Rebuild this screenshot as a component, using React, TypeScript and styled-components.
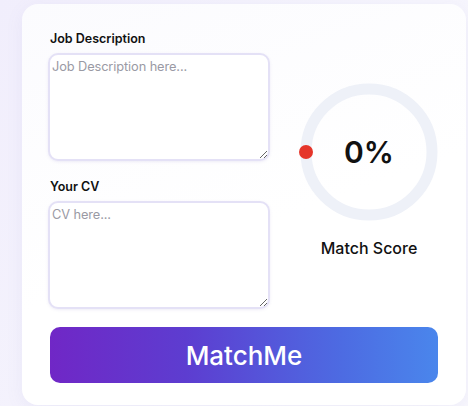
import React, { FC } from 'react';
import styled, { createGlobalStyle } from 'styled-components';

const GlobalStyle = createGlobalStyle`
  html, body {
    margin: 0;
    padding: 0;
    background: linear-gradient(120deg, #f1eefc 0%, #f6f5fd 60%, #f8f7fd 100%);
    font-family: Inter, "Noto Sans", "Liberation Sans", sans-serif;
    color: #111;
  }
`;

const Page = styled.div`
  width: 468px;
  height: 406px;
  padding: 4px 2px 0 22px;
  box-sizing: border-box;
  overflow: hidden;
`;

const Card = styled.div`
  width: 444px;
  background: linear-gradient(160deg, #fbfbfe 0%, #ffffff 55%);
  border-radius: 16px;
  box-shadow: 0 4px 18px rgba(120, 110, 190, 0.08);
  padding: 27px 28px 22px 28px;
  box-sizing: border-box;
`;

const Row = styled.div`
  display: flex;
  align-items: center;
`;

const FormCol = styled.div`
  width: 220px;
  display: flex;
  flex-direction: column;
`;

const Label = styled.label`
  font-size: 12.5px;
  line-height: 16px;
  font-weight: 600;
  color: #111;
  margin-bottom: 6px;
`;

const TextArea = styled.textarea<{ $spaced?: boolean }>`
  width: 222px;
  height: 108px;
  margin: 0 0 ${p => (p.$spaced ? '18px' : '0')} -2px;
  box-sizing: border-box;
  border: 2px solid #e4e1f6;
  border-radius: 10px;
  padding: 3px 2px;
  font-family: inherit;
  font-size: 12.8px;
  line-height: 18px;
  letter-spacing: -0.1px;
  color: #222;
  background: #fff;
  box-shadow: 0 1px 3px rgba(120, 110, 190, 0.12);
  outline: none;

  &::placeholder {
    color: #9a9aa4;
  }
`;

const ScoreCol = styled.div`
  flex: 1;
  display: flex;
  flex-direction: column;
  align-items: center;
  padding-left: 30px;
  gap: 18px;
`;

const Dial = styled.div`
  position: relative;
  width: 138px;
  height: 138px;

  svg {
    display: block;
    overflow: visible;
  }
`;

const Percent = styled.div`
  position: absolute;
  inset: 0;
  display: flex;
  align-items: center;
  justify-content: center;
  font-size: 30px;
  font-weight: 600;
  color: #111;
`;

const ScoreLabel = styled.div`
  font-size: 16px;
  line-height: 18px;
  font-weight: 500;
  color: #111;
`;

const MatchButton = styled.button`
  margin-top: 18px;
  width: 100%;
  height: 56px;
  border: none;
  border-radius: 10px;
  background: linear-gradient(90deg, #7027c6 0%, #5d3dd0 35%, #4d6be2 75%, #4a86ec 100%);
  color: #fff;
  font-family: inherit;
  font-size: 26px;
  font-weight: 500;
  cursor: pointer;
`;

const ScoreDial: FC<{ score: number }> = ({ score }) => {
  const r = 63;
  return (
    <Dial>
      <svg width="138" height="138" viewBox="0 0 138 138">
        <circle cx="69" cy="69" r={r} fill="none" stroke="#eef1f8" strokeWidth="11" />
        <circle cx={69 - r} cy="69" r="7" fill="#e5352a" />
      </svg>
      <Percent>{score}%</Percent>
    </Dial>
  );
};

const App: FC = () => {
  return (
    <Page>
      <GlobalStyle />
      <Card>
        <Row>
          <FormCol>
            <Label>Job Description</Label>
            <TextArea $spaced placeholder="Job Description here..." />
            <Label>Your CV</Label>
            <TextArea placeholder="CV here..." />
          </FormCol>
          <ScoreCol>
            <ScoreDial score={0} />
            <ScoreLabel>Match Score</ScoreLabel>
          </ScoreCol>
        </Row>
        <MatchButton>MatchMe</MatchButton>
      </Card>
    </Page>
  );
};

export default App;
